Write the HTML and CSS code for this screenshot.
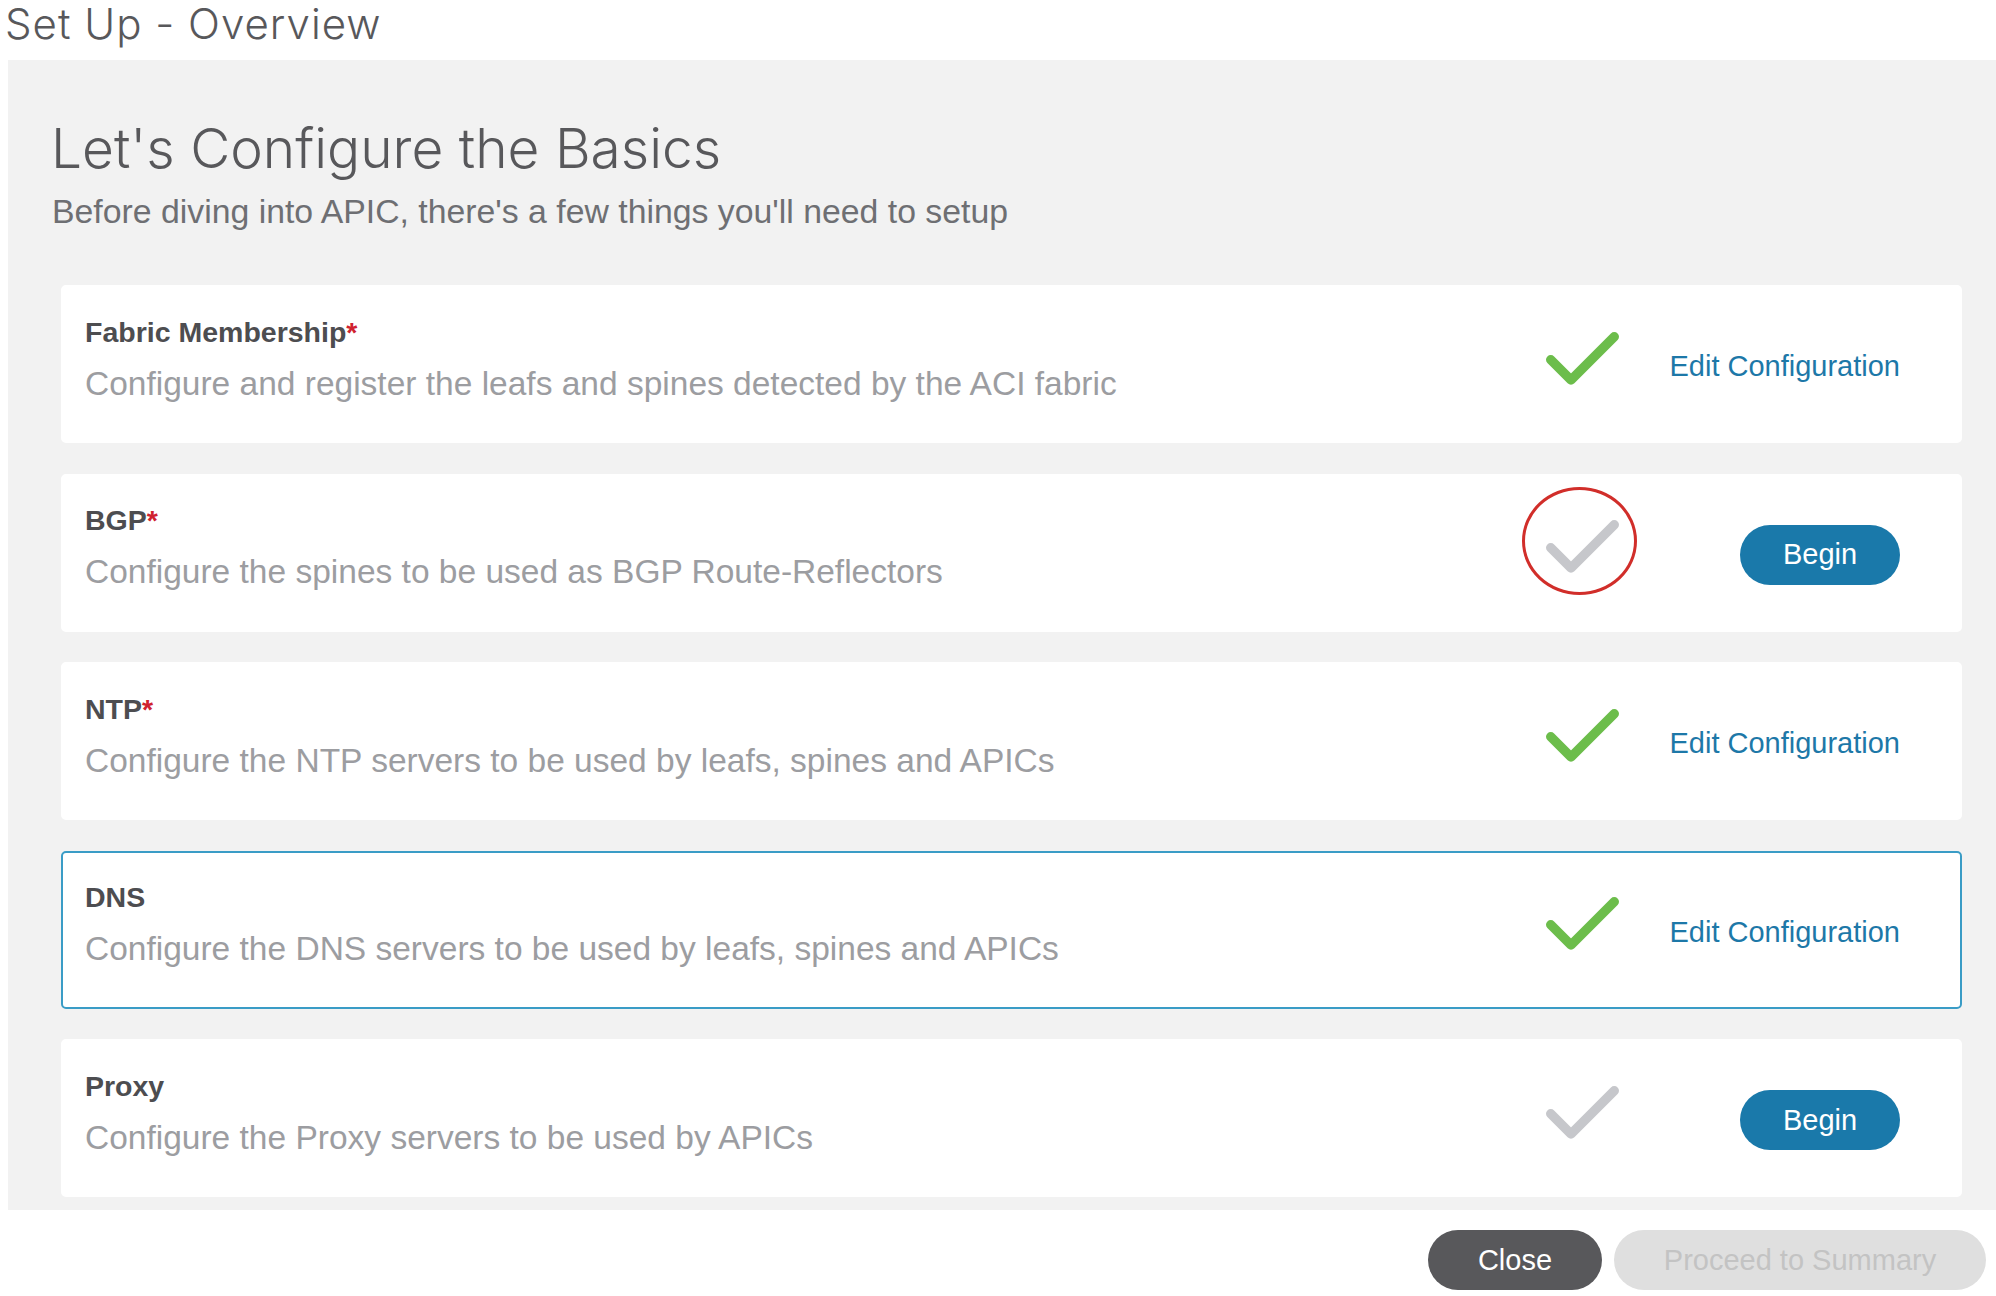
FILE: index.html
```html
<!DOCTYPE html>
<html lang="en">
<head>
<meta charset="utf-8">
<title>Set Up - Overview</title>
<link rel="stylesheet" href="styles.css">
</head>
<body>
<header class="page-title">Set Up - Overview</header>
<main class="panel">
  <h1 class="headline">Let's Configure the Basics</h1>
  <p class="lead">Before diving into APIC, there's a few things you'll need to setup</p>
  <ul class="steps">
    <li class="step">
      <div class="step-text">
        <h2 class="step-title">Fabric Membership<span class="req">*</span></h2>
        <p class="step-desc">Configure and register the leafs and spines detected by the ACI fabric</p>
      </div>
      <div class="step-status">
        <svg class="check done" viewBox="0 0 84 64" width="84" height="64"><path d="M10.75 32.75 L31 53 L74.25 9.75"/></svg>
      </div>
      <div class="step-action"><a class="link" href="#">Edit Configuration</a></div>
    </li>
    <li class="step">
      <div class="step-text">
        <h2 class="step-title">BGP<span class="req">*</span></h2>
        <p class="step-desc">Configure the spines to be used as BGP Route-Reflectors</p>
      </div>
      <div class="step-status">
        <svg class="check" viewBox="0 0 84 64" width="84" height="64"><path d="M10.75 32.75 L31 53 L74.25 9.75"/></svg>
        <span class="ring"></span>
      </div>
      <div class="step-action"><button class="btn btn-primary" type="button">Begin</button></div>
    </li>
    <li class="step">
      <div class="step-text">
        <h2 class="step-title">NTP<span class="req">*</span></h2>
        <p class="step-desc">Configure the NTP servers to be used by leafs, spines and APICs</p>
      </div>
      <div class="step-status">
        <svg class="check done" viewBox="0 0 84 64" width="84" height="64"><path d="M10.75 32.75 L31 53 L74.25 9.75"/></svg>
      </div>
      <div class="step-action"><a class="link" href="#">Edit Configuration</a></div>
    </li>
    <li class="step step-active">
      <div class="step-text">
        <h2 class="step-title">DNS</h2>
        <p class="step-desc">Configure the DNS servers to be used by leafs, spines and APICs</p>
      </div>
      <div class="step-status">
        <svg class="check done" viewBox="0 0 84 64" width="84" height="64"><path d="M10.75 32.75 L31 53 L74.25 9.75"/></svg>
      </div>
      <div class="step-action"><a class="link" href="#">Edit Configuration</a></div>
    </li>
    <li class="step">
      <div class="step-text">
        <h2 class="step-title">Proxy</h2>
        <p class="step-desc">Configure the Proxy servers to be used by APICs</p>
      </div>
      <div class="step-status">
        <svg class="check" viewBox="0 0 84 64" width="84" height="64"><path d="M10.75 32.75 L31 53 L74.25 9.75"/></svg>
      </div>
      <div class="step-action"><button class="btn btn-primary" type="button">Begin</button></div>
    </li>
  </ul>
</main>
<footer class="actions">
  <button class="btn btn-dark" type="button">Close</button>
  <button class="btn btn-disabled" type="button" disabled>Proceed to Summary</button>
</footer>
</body>
</html>
```
FILE: styles.css
```css
* { box-sizing: border-box; }

html, body {
  margin: 0;
  padding: 0;
  background: #ffffff;
}

body {
  font-family: "Liberation Sans", Arial, sans-serif;
  width: 1996px;
  height: 1296px;
  overflow: hidden;
}

.page-title {
  height: 60px;
  padding-left: 5px;
  font-family: Inter, "Liberation Sans", sans-serif;
  font-weight: 300;
  font-size: 42px;
  letter-spacing: 1px;
  line-height: 48px;
  color: #58585b;
  white-space: nowrap;
}

.panel {
  margin-left: 8px;
  height: 1150px;
  background: #f2f2f2;
  padding: 56px 34px 14px 53px;
  display: flex;
  flex-direction: column;
}

.headline {
  margin: 0 0 0 -10px;
  font-family: Inter, "Liberation Sans", sans-serif;
  font-weight: 300;
  font-size: 55px;
  line-height: 64px;
  color: #58585b;
}

.lead {
  margin: 11px 0 0 -9px;
  font-size: 33.8px;
  line-height: 40px;
  color: #6e6f73;
  white-space: nowrap;
}

.steps {
  list-style: none;
  margin: 54px 0 0 0;
  padding: 0;
  display: flex;
  flex-direction: column;
  gap: 30.5px;
}

.step {
  height: 158px;
  flex: none;
  background: #ffffff;
  border: 2px solid #ffffff;
  border-radius: 5px;
  padding: 0 60px 0 22px;
  display: grid;
  grid-template-columns: 1fr 84px 276px;
  align-items: center;
}

.step-active {
  border-color: #3a9cc6;
}

.step-text {
  padding: 27px 0 37px 0;
}

.step-title {
  margin: 0;
  font-size: 28.5px;
  line-height: 34px;
  font-weight: 700;
  color: #4d4d50;
}

.req {
  color: #d0222f;
}

.step-desc {
  margin: 15px 0 0 0;
  font-size: 33.5px;
  line-height: 40px;
  color: #9c9da1;
  white-space: nowrap;
}

.step-status {
  position: relative;
  width: 84px;
  height: 64px;
  margin-bottom: 11px;
}

.check {
  display: block;
  fill: none;
  stroke: #c6c7cb;
  stroke-width: 9.5;
  stroke-linecap: round;
  stroke-linejoin: round;
}

.check.done {
  stroke: #6cbd4b;
}

.ring {
  position: absolute;
  left: -18px;
  top: -28px;
  width: 115px;
  height: 108px;
  border: 3px solid #d12e2a;
  border-radius: 50%;
}

.step-action {
  display: flex;
  justify-content: flex-end;
  margin-top: 4px;
}

.link {
  font-size: 29px;
  line-height: 36px;
  color: #1d78a8;
  text-decoration: none;
  white-space: nowrap;
}

.btn {
  font-family: "Liberation Sans", Arial, sans-serif;
  font-size: 29px;
  height: 60px;
  border: none;
  border-radius: 30px;
  padding: 0;
  cursor: pointer;
}

.btn-primary {
  width: 160px;
  background: #1a79aa;
  color: #ffffff;
}

.actions {
  display: flex;
  justify-content: flex-end;
  gap: 12px;
  padding: 20px 10px 0 0;
}

.btn-dark {
  width: 174px;
  background: #58585b;
  color: #ffffff;
}

.btn-disabled {
  width: 372px;
  background: #dfdfdf;
  color: #c3c3c3;
  cursor: default;
}
```
